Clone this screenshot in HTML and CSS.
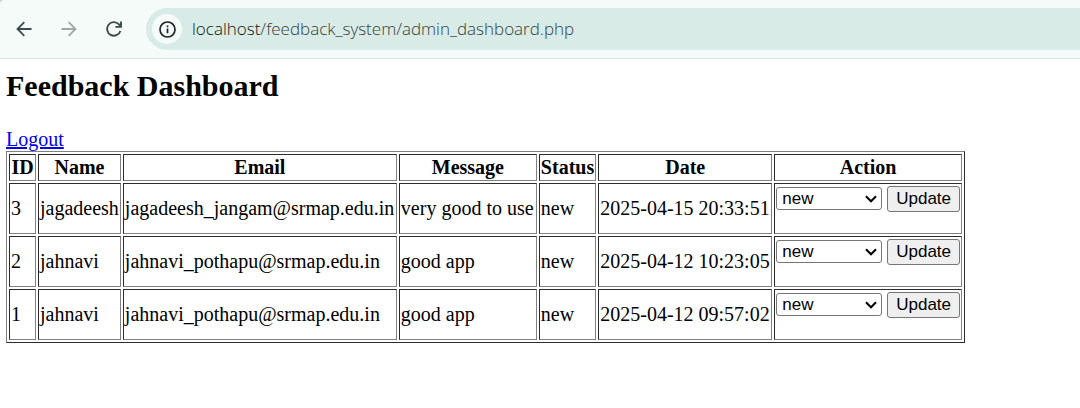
FILE: index.html
```
<!DOCTYPE html>
<html lang="en">
<head>
<meta charset="utf-8">
<title>Feedback Dashboard</title>
<link rel="stylesheet" href="styles.css">
</head>
<body>
<header class="toolbar">
  <nav class="nav-buttons" aria-label="Browser navigation">
    <button class="nav-button" type="button" aria-label="Back">
      <svg width="16" height="16" viewBox="0 0 16 16" fill="none" stroke="currentColor" stroke-width="1.8"><path d="M15.5 8H1.8M8.3 1.2L1.5 8l6.8 6.8"/></svg>
    </button>
    <button class="nav-button nav-button-off" type="button" aria-label="Forward" disabled>
      <svg width="16" height="16" viewBox="0 0 16 16" fill="none" stroke="currentColor" stroke-width="1.8"><path d="M.5 8h13.7M7.7 1.2L14.5 8l-6.8 6.8"/></svg>
    </button>
    <button class="nav-button" type="button" aria-label="Reload">
      <svg width="16" height="16" viewBox="0 0 16 16" fill="none" stroke="currentColor" stroke-width="1.9"><path d="M14.4 10A6.8 6.8 0 1 1 13 3.4l1.6 1.8M15 .5v5.4H9.4"/></svg>
    </button>
  </nav>
  <div class="address">
    <button class="site-info" type="button" aria-label="Site information">
      <svg width="17" height="17" viewBox="0 0 17 17" fill="none" stroke="currentColor" stroke-width="1.7"><circle cx="8.5" cy="8.5" r="7.5"/><path d="M8.5 7.6v4.6M8.5 4.5v1.8"/></svg>
    </button>
    <span class="url"><span class="host">localhost</span>/feedback_system/admin_dashboard.php</span>
  </div>
</header>
<main class="page">
  <h2 class="title">Feedback Dashboard</h2>
  <a class="logout" href="#">Logout</a>
  <table class="feedback">
    <colgroup><col class="col-id"><col><col class="col-email"><col class="col-message"><col><col class="col-date"><col></colgroup>
    <thead>
      <tr><th>ID</th><th>Name</th><th>Email</th><th>Message</th><th>Status</th><th>Date</th><th>Action</th></tr>
    </thead>
    <tbody>
      <tr>
        <td>3</td><td>jagadeesh</td><td>jagadeesh_jangam@srmap.edu.in</td><td>very good to use</td><td>new</td><td>2025-04-15 20:33:51</td>
        <td><form class="action"><select class="status" aria-label="Status of feedback 3"><option>new</option><option>in progress</option><option>resolved</option></select><button class="update" type="button">Update</button></form></td>
      </tr>
      <tr>
        <td>2</td><td>jahnavi</td><td>jahnavi_pothapu@srmap.edu.in</td><td>good app</td><td>new</td><td>2025-04-12 10:23:05</td>
        <td><form class="action"><select class="status" aria-label="Status of feedback 2"><option>new</option><option>in progress</option><option>resolved</option></select><button class="update" type="button">Update</button></form></td>
      </tr>
      <tr>
        <td>1</td><td>jahnavi</td><td>jahnavi_pothapu@srmap.edu.in</td><td>good app</td><td>new</td><td>2025-04-12 09:57:02</td>
        <td><form class="action"><select class="status" aria-label="Status of feedback 1"><option>new</option><option>in progress</option><option>resolved</option></select><button class="update" type="button">Update</button></form></td>
      </tr>
    </tbody>
  </table>
</main>
</body>
</html>
```
FILE: styles.css
```
body {
  margin: 0;
  background: #fff;
  color: #000;
  font: 20px/23px "Liberation Serif", serif;
}

.toolbar {
  display: flex;
  align-items: center;
  gap: 18px;
  padding: 8px 0 8px 10px;
  background: radial-gradient(circle at 8px 8px, #f4fbf8 9px, #c3ddd5 10px) 0 0 / 8px 8px no-repeat #f4fbf8;
  border-bottom: 1px solid #d8e2df;
}

.nav-buttons {
  display: flex;
  gap: 17px;
}

.nav-button {
  display: flex;
  align-items: center;
  justify-content: center;
  width: 28px;
  height: 28px;
  padding: 0;
  border: 0;
  background: none;
  color: #3b4b47;
}

.nav-button-off {
  color: #a0a8a5;
}

.address {
  display: flex;
  flex: 1;
  align-items: center;
  gap: 10px;
  padding: 6px;
  border-radius: 21px 0 0 21px;
  background: #d9ebe6;
}

.site-info {
  display: flex;
  align-items: center;
  justify-content: center;
  width: 30px;
  height: 30px;
  padding: 0;
  border: 0;
  border-radius: 50%;
  background: #f4fbf8;
  color: #1c2725;
}

.url {
  color: #35413e;
  font: 340 17px/24px "Open Sans", sans-serif;
}

.host {
  color: #0c1513;
}

.page {
  padding: 10px 6px;
}

.title {
  margin: 0 0 25px;
  font-size: 30px;
  line-height: 34px;
}

.logout {
  display: block;
  width: fit-content;
  color: #0000ee;
}

.feedback {
  border: 1px outset #808080;
  border-spacing: 2px;
  white-space: nowrap;
}

.col-id {
  width: 27px;
}

.col-email {
  width: 274px;
}

.col-message {
  width: 138px;
}

.col-date {
  width: 174px;
}

.feedback th,
.feedback td {
  padding: 1px;
  border: 1px inset #808080;
}

.action {
  display: flex;
  align-items: flex-start;
  gap: 5px;
  margin: 1px 0 20px;
}

.status,
.update {
  box-sizing: border-box;
  margin: 0;
  border: 1px solid #767676;
  border-radius: 3px;
  color: #000;
  font: 17px/20px "Liberation Sans", sans-serif;
}

.status {
  width: 106px;
  height: 23px;
  margin-top: 1px;
  padding: 0 20px 0 5px;
  appearance: none;
  background: url("data:image/svg+xml,%3Csvg xmlns='http://www.w3.org/2000/svg' width='12' height='8' fill='none' stroke='%23000' stroke-width='2'%3E%3Cpath d='M1 1.3l5 5 5-5'/%3E%3C/svg%3E") right 4px center no-repeat #fff;
}

.update {
  height: 26px;
  padding: 0 8px;
  background: #efefef;
}
```
